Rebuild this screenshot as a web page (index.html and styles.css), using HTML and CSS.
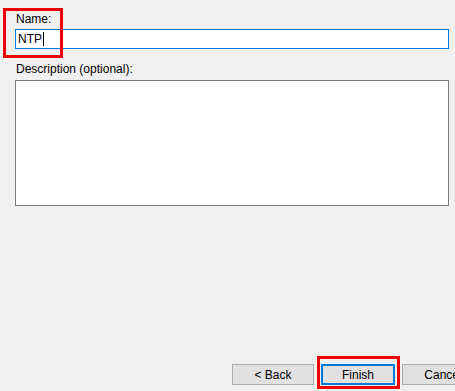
FILE: index.html
```html
<!DOCTYPE html>
<html lang="en">
<head>
  <meta charset="UTF-8" />
  <title>Wizard - Name</title>
  <link rel="stylesheet" href="styles.css">
</head>
<body>
  <div class="wizard">
    <div class="fields">
      <label class="label" for="name">Name:</label>
      <div class="textbox focused" id="name">NTP<span class="caret"></span></div>

      <label class="label desc-label" for="desc">Description (optional):</label>
      <div class="textarea" id="desc"></div>
    </div>

    <div class="buttons">
      <button class="btn">&lt; Back</button>
      <button class="btn default">Finish</button>
      <button class="btn">Cancel</button>
    </div>

    <div class="mark mark-name"></div>
    <div class="mark mark-finish"></div>
  </div>
</body>
</html>
```

FILE: styles.css
```css
html, body {
  margin: 0;
  padding: 0;
  background: #f0f0f0;
  overflow: hidden;
}
body {
  font-family: 'Liberation Sans', Arial, sans-serif;
  font-size: 12px;
  color: #000;
}
.wizard {
  position: relative;
  width: 455px;
  height: 391px;
}
.fields {
  padding: 12px 6px 0 15px;
}
.label {
  display: block;
  height: 15px;
  line-height: 15px;
  padding-left: 1px;
}
.textbox {
  margin-top: 2px;
  height: 18px;
  line-height: 18px;
  border: 1px solid #7a7a7a;
  background: #fff;
  padding-left: 2px;
  display: flex;
  align-items: center;
}
.textbox.focused {
  border-color: #0078d7;
}
.caret {
  display: inline-block;
  width: 1px;
  height: 14px;
  background: #000;
  margin-left: 1px;
}
.desc-label {
  margin-top: 13px;
}
.textarea {
  margin-top: 3px;
  height: 124px;
  border: 1px solid #7a7a7a;
  background: #fff;
}
.buttons {
  display: flex;
  gap: 7px;
  padding-left: 232px;
  margin-top: 158px;
  white-space: nowrap;
}
.btn {
  flex: none;
  width: 82px;
  height: 21px;
  padding: 0;
  font-family: inherit;
  font-size: 12px;
  color: #000;
  background: #e1e1e1;
  border: 1px solid #adadad;
  border-radius: 0;
}
.btn.default {
  width: 74px;
  border: 2px solid #0078d7;
}
.mark {
  position: absolute;
  border: 3px solid #f00000;
  box-sizing: border-box;
}
.mark-name {
  left: 3px;
  top: 8px;
  width: 60px;
  height: 50px;
}
.mark-finish {
  left: 317px;
  top: 356px;
  width: 83px;
  height: 33px;
}
```
